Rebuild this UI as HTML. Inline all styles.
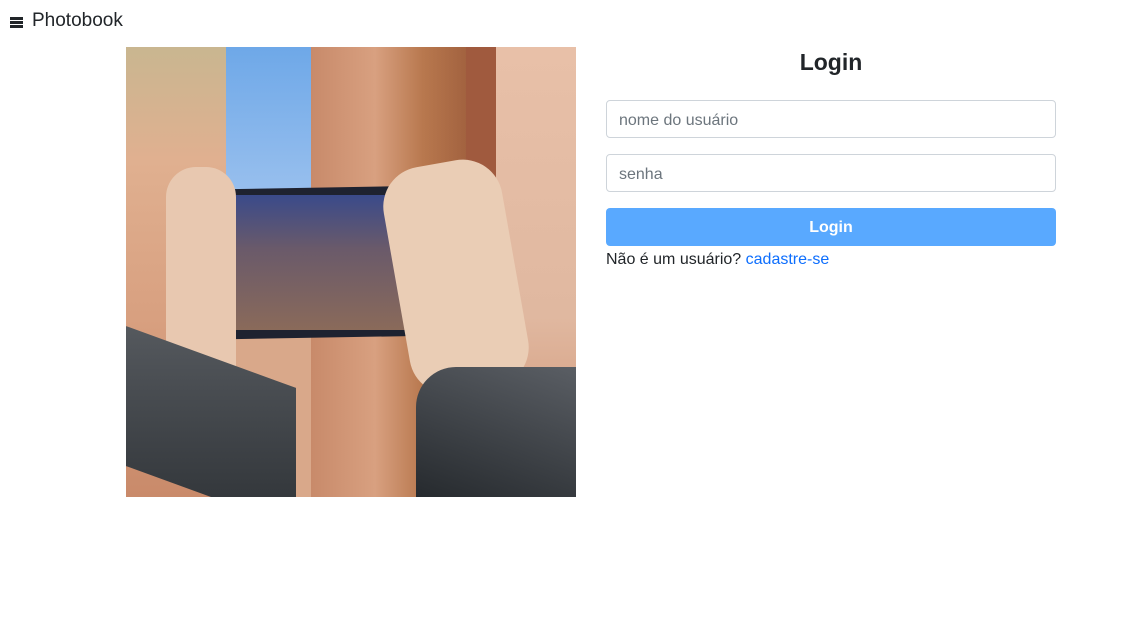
<!DOCTYPE html>
<html><head><meta charset="utf-8"><style>
*{box-sizing:border-box;margin:0;padding:0}
body{width:1126px;height:624px;background:#fff;font-family:"Liberation Sans",sans-serif;color:#212529;position:relative;overflow:hidden}
.brand{position:absolute;left:10px;top:10px;font-size:19px;color:#212529;display:flex;align-items:center}
.ham{width:13px;margin-right:9px;margin-top:3px}
.ham i{display:block;height:2.5px;background:#212529;margin:1.5px 0}
.photo{position:absolute;left:126px;top:47px;width:450px;height:450px;overflow:hidden;background:#d9a88a}
.photo div{position:absolute}
h2{position:absolute;left:606px;width:450px;top:49px;text-align:center;font-size:23px;font-weight:bold}
.inp{position:absolute;left:606px;width:450px;height:38px;border:1px solid #ced4da;border-radius:4px;padding:0 12px;font-size:16px;color:#6c757d;line-height:40px}
.btn{position:absolute;left:606px;top:208px;width:450px;height:38px;background:#59a9ff;border-radius:4px;color:#fff;font-size:16px;font-weight:bold;text-align:center;line-height:40px}
.reg{position:absolute;left:606px;top:251px;font-size:16px}
.reg a{color:#0d6efd;text-decoration:none}
</style></head><body>
<div class="brand"><div class="ham"><i></i><i></i><i></i></div>Photobook</div>
<div class="photo">
<div style="left:0;top:0;width:110px;height:450px;background:linear-gradient(180deg,#c9b690 0%,#e0b090 25%,#d8a080 60%,#c98a6a 100%)"></div>
<div style="left:100px;top:0;width:95px;height:200px;background:linear-gradient(180deg,#6ea8e8,#a8c8f0)"></div>
<div style="left:185px;top:0;width:160px;height:450px;background:linear-gradient(90deg,#c88a6a,#d8a080 40%,#b8784e 70%,#a0603e)"></div>
<div style="left:340px;top:0;width:30px;height:450px;background:#a05a3e"></div>
<div style="left:370px;top:0;width:80px;height:450px;background:linear-gradient(180deg,#e8c0a8,#e0b8a0 60%,#d09070)"></div>
<div style="left:95px;top:140px;width:270px;height:150px;background:#1e2230;border-radius:12px;transform:rotate(-1deg)"></div>
<div style="left:110px;top:148px;width:180px;height:135px;background:linear-gradient(180deg,#3a4a8a,#6a5a6a 40%,#8a6a5a)"></div>
<div style="left:40px;top:120px;width:70px;height:260px;background:#e8c8b0;border-radius:30px"></div>
<div style="left:270px;top:115px;width:120px;height:230px;background:#eacdb5;border-radius:40px;transform:rotate(-10deg)"></div>
<div style="left:0;top:310px;width:170px;height:140px;background:linear-gradient(160deg,#55595e,#2e3236);transform:skewY(20deg)"></div>
<div style="left:290px;top:320px;width:160px;height:130px;background:linear-gradient(200deg,#5a5e64,#262a2e);border-radius:40px 0 0 0"></div>
</div>
<h2>Login</h2>
<div class="inp" style="top:100px">nome do usuário</div>
<div class="inp" style="top:154px">senha</div>
<div class="btn">Login</div>
<div class="reg">Não é um usuário? <a>cadastre-se</a></div>
</body></html>
